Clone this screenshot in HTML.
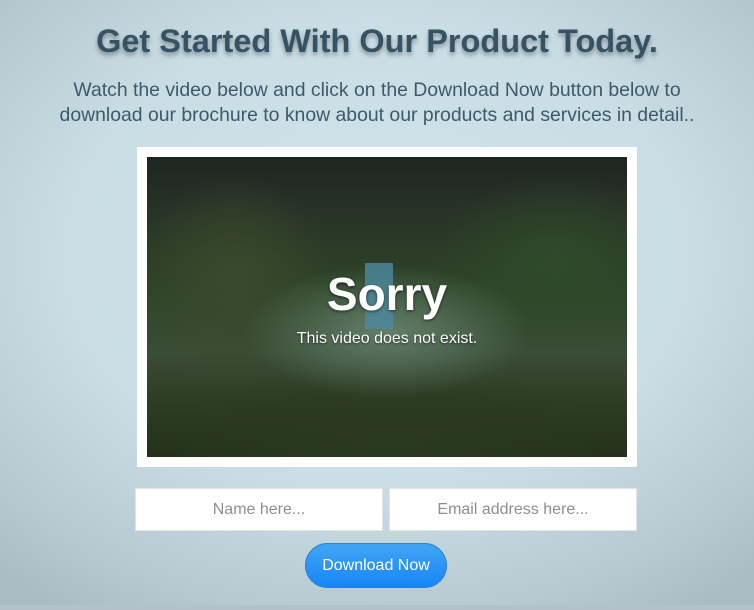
<!DOCTYPE html>
<html><head><style>
html,body{margin:0;padding:0}
body{width:754px;height:610px;overflow:hidden;position:relative;font-family:"Liberation Sans",Arial,sans-serif;
background:radial-gradient(ellipse 75% 70% at 50% 42%,#d0e3ea 0%,#cadde5 55%,#b6c9d1 85%,#a9bcc4 100%);}
.bot{position:absolute;left:0;right:0;top:605px;height:5px;background:#b3c2c8}
h1{position:absolute;top:23px;left:0;width:754px;margin:0;text-align:center;font-size:32.5px;font-weight:bold;color:#355365;text-shadow:0 3px 5px rgba(0,0,0,.35)}
p{position:absolute;top:78px;left:0;width:754px;margin:0;text-align:center;font-size:19.4px;line-height:25px;color:#3b5b6a}
.frame{position:absolute;left:137px;top:147px;width:500px;height:320px;background:#fff}
.vid{position:absolute;left:147px;top:157px;width:480px;height:300px;overflow:hidden;
background:
radial-gradient(ellipse 30% 22% at 50% 58%,rgba(110,140,120,.8),transparent),
radial-gradient(ellipse 20% 35% at 18% 40%,#3a4a2c,transparent),
radial-gradient(ellipse 25% 30% at 85% 35%,#2f4a2a,transparent),
radial-gradient(ellipse 60% 25% at 50% 95%,#2a3a20,transparent),
linear-gradient(#1f2522 0%,#283526 20%,#2e4428 45%,#3a4d36 65%,#2b3a22 85%,#22301b 100%)}
.t1{position:absolute;left:0;width:480px;top:110px;text-align:center;color:#fff;font-weight:bold;font-size:46px;text-shadow:0 1px 3px rgba(0,0,0,.6)}
.t2{position:absolute;left:0;width:480px;top:173px;text-align:center;color:#fff;font-size:16px;text-shadow:0 1px 2px rgba(0,0,0,.6)}
.door{position:absolute;left:218px;top:106px;width:28px;height:66px;background:#4c8aa0;opacity:.8}
.in{position:absolute;top:488px;height:43px;background:#fff;border:1px solid #dfe5e7;box-sizing:border-box;text-align:center;line-height:42px;color:#8f8f8f;font-size:16px}
.btn{position:absolute;left:305px;top:543px;width:142px;height:45px;border-radius:23px;background:linear-gradient(#42a5f5,#1686f7);border:1px solid #2a83d0;box-sizing:border-box;color:#fff;text-align:center;line-height:43px;font-size:16px}
</style></head><body>
<h1>Get Started With Our Product Today.</h1>
<p>Watch the video below and click on the Download Now button below to<br>download our brochure to know about our products and services in detail..</p>
<div class="frame"></div>
<div class="vid"><div class="door"></div><div class="t1">Sorry</div><div class="t2">This video does not exist.</div></div>
<div class="in" style="left:135px;width:248px">Name here...</div>
<div class="in" style="left:389px;width:248px">Email address here...</div>
<div class="btn">Download Now</div>
<div class="bot"></div>
</body></html>
